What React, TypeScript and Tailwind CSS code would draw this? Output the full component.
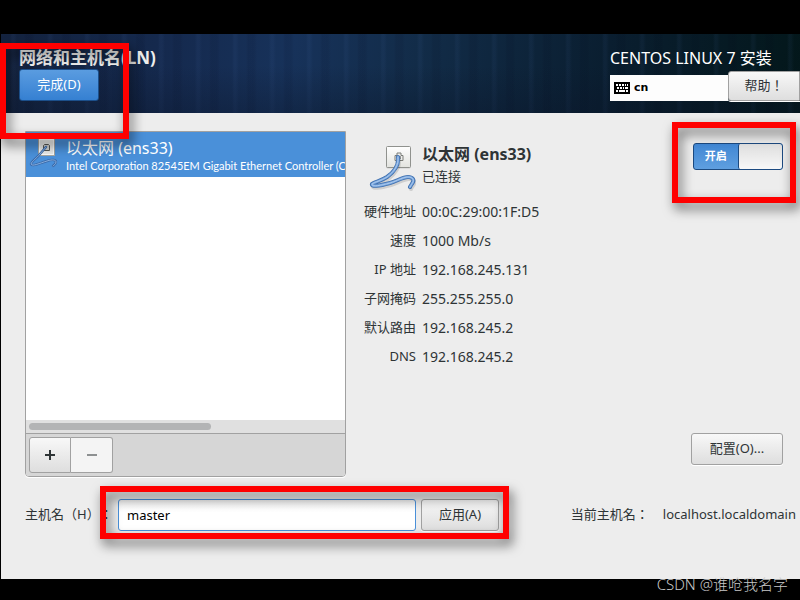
import React, { useState } from "react";
import clsx from "clsx";

const details = [
  { label: "硬件地址", value: "00:0C:29:00:1F:D5" },
  { label: "速度", value: "1000 Mb/s" },
  { label: "IP 地址", value: "192.168.245.131" },
  { label: "子网掩码", value: "255.255.255.0" },
  { label: "默认路由", value: "192.168.245.2" },
  { label: "DNS", value: "192.168.245.2" },
];

const LARGE_CABLE =
  "M30 14C31 22 26 29 19 34C13 38 6 39 4 41C3 44 11 43 22 40C29 38 35 34 40 34C45 34 46 37 45 39C44 41 43 42 42 44";
const SMALL_CABLE = "M18 10L12 17C9 21 4 24 3 27C4 30 12 26 19 24C25 22 28 23 28 25C28 27 26 28 25 29";

const EthernetIcon = ({ className }: { className?: string }) => (
  <svg viewBox="0 0 48 48" className={className} aria-hidden="true">
    <defs>
      <linearGradient id="plate" x1="0" y1="0" x2="0" y2="1">
        <stop offset="0" stopColor="#ffffff" />
        <stop offset="1" stopColor="#e2e3df" />
      </linearGradient>
    </defs>
    <rect x="18.5" y="4.5" width="24" height="21" rx="1" fill="#00000022" />
    <rect x="18.5" y="3.5" width="24" height="21" rx="1" fill="url(#plate)" stroke="#90928e" />
    <path d="M27 17.5v-5h2v-2.5h4v2.5h2v5z" fill="#eeeeec" stroke="#7b7d79" />
    <path d="M29 13h4v3h-4z" fill="#9a9c98" />
    {/* cable: shadow, outline, body, highlight */}
    <g fill="none" strokeLinecap="round" strokeLinejoin="round">
      <path d={LARGE_CABLE} stroke="#00000020" strokeWidth="4" transform="translate(1 2)" />
      <path d={LARGE_CABLE} stroke="#3f6fae" strokeWidth="4" />
      <path d={LARGE_CABLE} stroke="#78a5dc" strokeWidth="2.4" />
      <path d={LARGE_CABLE} stroke="#b9d3f2" strokeWidth="0.8" />
    </g>
  </svg>
);

const SmallEthernetIcon = ({ className }: { className?: string }) => (
  <svg viewBox="0 0 30 32" className={className} aria-hidden="true">
    <rect x="10.5" y="1.5" width="16" height="17" fill="#e9eae8" stroke="#a3a5a1" />
    <rect x="11.5" y="2.5" width="14" height="15" fill="none" stroke="#fafafa" />
    <path d="M15.5 13.5v-5l1-1h4l1 1v5z" fill="#cfd0cd" stroke="#555753" />
    <g fill="none" strokeLinecap="round" strokeLinejoin="round">
      <path d={SMALL_CABLE} stroke="#3a69a8" strokeWidth="2.4" />
      <path d={SMALL_CABLE} stroke="#86aede" strokeWidth="1" />
    </g>
  </svg>
);

const KeyboardIcon = () => (
  <svg viewBox="0 0 16 12" className="h-3 w-4" aria-hidden="true" shapeRendering="crispEdges">
    <rect width="16" height="12" rx="1" fill="#000" />
    <path
      d="M2 2h2v2H2zM5 2h2v2H5zM8 2h2v2H8zM11 2h1v2h-1zM13 2h1v2h-1zM3 5h2v2H3zM6 5h2v2H6zM9 5h1v2H9zM11 5h3v2h-3zM2 8h2v2H2zM5 8h6v2H5zM12 8h2v2h-2z"
      fill="#fff"
    />
  </svg>
);

// red box that highlights the control it is placed on
const Mark = ({ className }: { className: string }) => (
  <div
    className={clsx(
      "pointer-events-none absolute z-10 border-6 border-[#ff0000] drop-shadow-[3px_6px_6px_rgba(0,0,0,0.6)]",
      className
    )}
  />
);

// full-width punctuation sits in the middle of its cell in this family
const centeredPunctuation = "font-['Noto_Sans','Noto_Sans_CJK_JP',sans-serif] [text-spacing-trim:space-all]";

const buttonStyle =
  "rounded-[3px] border border-[#a1a1a1] bg-linear-to-b from-[#f8f8f8] to-[#dedede] text-[13px] text-[#2e3436] shadow-[0_1px_0_#ffffff]";

const Header = () => (
  <header className="flex h-[79px] justify-between bg-[linear-gradient(to_bottom,transparent_40%,rgba(10,20,40,0.35)),repeating-linear-gradient(90deg,transparent_0_9px,rgba(90,130,200,0.06)_11px_13px,transparent_16px_23px,rgba(0,0,20,0.08)_25px_31px,transparent_34px_37px),linear-gradient(100deg,#14233f,#152a4f_22%,#17325a_36%,#122c48_52%,#0a1e30_75%,#03171a)] text-white">
    <div className="relative pt-3 pl-[18px]">
      <h1 className="text-[17px] leading-[23px] font-bold text-[#eeeeec]">网络和主机名(LN)</h1>
      <button className="h-8 w-20 rounded-[3px] border border-[#1c4f8a] bg-linear-to-b from-[#5a9ce0] to-[#3580d2] text-[13px] text-white">
        完成(D)
      </button>
      <Mark className="top-[9px] -left-px h-24 w-[129px]" />
    </div>
    <div className="w-[190px] pt-3">
      <h2 className="text-base leading-[25px]">CENTOS LINUX 7 安装</h2>
      <div className="flex items-end">
        <div className="flex h-[26px] flex-1 items-center gap-1 bg-[#fdfdfd] pl-1 font-['DejaVu_Sans',sans-serif] text-[11px] font-bold text-black">
          <KeyboardIcon />
          <span>cn</span>
        </div>
        <button className={clsx(buttonStyle, centeredPunctuation, "h-[30px] w-[72px] rounded-r-none")}>
          帮助！
        </button>
      </div>
    </div>
  </header>
);

const DeviceList = () => (
  <section className="flex w-[321px] shrink-0 flex-col overflow-hidden rounded-b-[4px] border border-[#a1a1a1] bg-white shadow-[0_1px_0_#ffffff]">
    <div className="flex h-[45px] shrink-0 bg-[#4a90d9] text-white">
      <SmallEthernetIcon className="mt-[5px] ml-[2px] h-8 w-[30px] shrink-0" />
      <div className="min-w-0 pt-[6px] pl-2">
        <p className="text-base leading-5">以太网 (ens33)</p>
        <p className="font-['Lato',sans-serif] text-[11px] leading-4 whitespace-nowrap">
          Intel Corporation 82545EM Gigabit Ethernet Controller (C
        </p>
      </div>
    </div>
    <div className="flex-1" />
    <div className="bg-[#e0e0e0] p-[3px]">
      <div className="h-[7px] w-[182px] rounded-full bg-[#b3b4b5]" />
    </div>
    <div className="flex border-t border-[#a1a1a1] bg-[#d6d6d6] p-[3px]">
      <button
        aria-label="添加"
        className="flex h-9 w-[42px] items-center justify-center rounded-l-[3px] border border-[#a1a1a1] bg-linear-to-b from-[#f8f8f8] to-[#dedede]"
      >
        <svg viewBox="0 0 10 10" className="h-[10px] w-[10px]">
          <path d="M4 0h2v4h4v2H6v4H4V6H0V4h4z" fill="#2e3436" />
        </svg>
      </button>
      <button
        aria-label="删除"
        disabled
        className="flex h-9 w-[42px] items-center justify-center rounded-r-[3px] border border-l-0 border-[#a1a1a1] bg-[#f4f4f4]"
      >
        <svg viewBox="0 0 10 10" className="h-[10px] w-[10px]">
          <path d="M0 4h10v2H0z" fill="#8d9091" />
        </svg>
      </button>
    </div>
  </section>
);

const DeviceDetails = () => {
  const [on, setOn] = useState(true);

  return (
    <section className="flex min-w-0 flex-1 flex-col justify-between">
      <div className="flex justify-between">
        <div>
          <div className="flex pt-3">
            <EthernetIcon className="ml-1 h-12 w-12" />
            <div className="pl-[6px]">
              <h3 className="text-base leading-[23px] font-bold">以太网 (ens33)</h3>
              <p className="text-[13px] leading-5">已连接</p>
            </div>
          </div>
          <dl className="grid grid-cols-[52px_auto] gap-x-[6px] pt-[6px] leading-[29px]">
            {details.map(({ label, value }) => (
              <React.Fragment key={label}>
                <dt className="text-right text-[13px] whitespace-nowrap">{label}</dt>
                <dd className="text-sm leading-[29px]">{value}</dd>
              </React.Fragment>
            ))}
          </dl>
        </div>
        <div className="relative h-fit pt-3">
          <label className="relative flex h-[27px] w-[90px] cursor-pointer overflow-hidden rounded-[3px] border border-[#1c4a80] bg-linear-to-b from-[#4187d3] to-[#5f9fe0] text-[11px] font-bold text-white">
            <input
              type="checkbox"
              role="switch"
              checked={on}
              onChange={() => setOn(!on)}
              className="absolute inset-0 appearance-none"
            />
            <span className="flex flex-1 items-center justify-center">开启</span>
            <span
              className={clsx(
                "flex-1 rounded-[2px] border-l border-[#1c4a80] bg-linear-to-b from-[#dedede] to-[#f8f8f8]",
                !on && "order-first"
              )}
            />
          </label>
          <Mark className="-top-[9px] -right-[13px] h-[81px] w-[124px]" />
        </div>
      </div>
      <button className={clsx(buttonStyle, "mb-3 h-8 w-[92px] self-end")}>配置(O)...</button>
    </section>
  );
};

const HostnameRow = () => (
  <form className="flex items-center pr-1 text-[13px]" onSubmit={(e) => e.preventDefault()}>
    <div className="relative flex items-center">
      <label htmlFor="hostname" className={clsx(centeredPunctuation, "w-[93px] whitespace-nowrap")}>
        主机名（H）：
      </label>
      <input
        id="hostname"
        defaultValue="master"
        className="h-8 w-[298px] rounded-[3px] border border-[#4a90d9] bg-linear-to-b from-[#f0f0f0] to-white to-40% px-2 text-black outline-none"
      />
      <button className={clsx(buttonStyle, "ml-[5px] h-8 w-[78px]")}>应用(A)</button>
      <Mark className="-top-[13px] -right-[10px] h-[53px] w-[409px]" />
    </div>
    <p className="ml-auto flex gap-[14px] whitespace-nowrap">
      <span className={centeredPunctuation}>当前主机名：</span>
      <span>localhost.localdomain</span>
    </p>
  </form>
);

const App = () => {
  return (
    <div className="relative flex min-h-screen flex-col bg-black pt-[34px] pb-[21px] pl-px font-['Noto_Sans','Noto_Sans_CJK_SC',sans-serif] text-[#2e3436]">
      <Header />
      <main className="flex flex-1 flex-col gap-[22px] bg-[#ededed] pt-[18px] pb-12 pl-6">
        <div className="flex flex-1 gap-[18px] pr-[17px]">
          <DeviceList />
          <DeviceDetails />
        </div>
        <HostnameRow />
      </main>
      <p className="absolute right-3 bottom-[5px] text-[15px] leading-[22px] font-light text-[#c8c8c8]">
        CSDN @谁呛我名字
      </p>
    </div>
  );
};

export default App;
